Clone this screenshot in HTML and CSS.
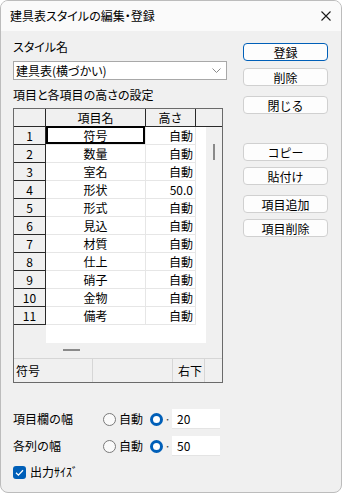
FILE: index.html
```html
<!DOCTYPE html>
<html lang="ja">

<head>
    <meta charset="UTF-8">
    <meta name="viewport" content="width=device-width, initial-scale=1.0">
    <title>建具表スタイルの編集・登録</title>
    <link rel="stylesheet" href="styles.css">
</head>

<body>
    <div class="window">
        <div class="titlebar">
            <span class="title">建具表スタイルの編集・登録</span>
            <svg class="close" width="10" height="10" viewBox="0 0 10 10">
                <path d="M0.5 0.5 L9.5 9.5 M9.5 0.5 L0.5 9.5" stroke="#1a1a1a" stroke-width="1.1" fill="none"/>
            </svg>
        </div>
        <div class="content">
            <div class="main">
                <div class="label first">スタイル名</div>
                <div class="select">
                    <span>建具表(横づかい)</span>
                    <svg width="9" height="5" viewBox="0 0 9 5">
                        <path d="M0.5 0.5 L4.5 4.5 L8.5 0.5" stroke="#8a8a8a" stroke-width="1" fill="none"/>
                    </svg>
                </div>
                <div class="label second">項目と各項目の高さの設定</div>

                <div class="grid">
                    <div class="grid-head">
                        <div class="hnum"></div>
                        <div class="hname">項目名</div>
                        <div class="hht">高さ</div>
                        <div class="hrest"></div>
                    </div>
                    <div class="grid-body">
                        <div class="rows">
                            <div class="row"><div class="num">1</div><div class="name sel">符号</div><div class="ht">自動</div></div>
                            <div class="row"><div class="num">2</div><div class="name">数量</div><div class="ht">自動</div></div>
                            <div class="row"><div class="num">3</div><div class="name">室名</div><div class="ht">自動</div></div>
                            <div class="row"><div class="num">4</div><div class="name">形状</div><div class="ht">50.0</div></div>
                            <div class="row"><div class="num">5</div><div class="name">形式</div><div class="ht">自動</div></div>
                            <div class="row"><div class="num">6</div><div class="name">見込</div><div class="ht">自動</div></div>
                            <div class="row"><div class="num">7</div><div class="name">材質</div><div class="ht">自動</div></div>
                            <div class="row"><div class="num">8</div><div class="name">仕上</div><div class="ht">自動</div></div>
                            <div class="row"><div class="num">9</div><div class="name">硝子</div><div class="ht">自動</div></div>
                            <div class="row"><div class="num">10</div><div class="name">金物</div><div class="ht">自動</div></div>
                            <div class="row"><div class="num">11</div><div class="name">備考</div><div class="ht">自動</div></div>
                            <div class="row filler"><div class="num"></div></div>
                        </div>
                        <div class="vscroll"><div class="vthumb"></div></div>
                    </div>
                    <div class="hscroll"><div class="hthumb"></div></div>
                    <div class="status">
                        <div class="st st1">符号</div>
                        <div class="st st2"></div>
                        <div class="st st3">右下</div>
                        <div class="st st4"></div>
                    </div>
                </div>

                <div class="opt-row">
                    <span class="opt-label">項目欄の幅</span>
                    <span class="radio"></span>
                    <span class="opt-text">自動</span>
                    <span class="radio on"></span>
                    <span class="dot">·</span>
                    <span class="num-input">20</span>
                </div>
                <div class="opt-row">
                    <span class="opt-label">各列の幅</span>
                    <span class="radio"></span>
                    <span class="opt-text">自動</span>
                    <span class="radio on"></span>
                    <span class="dot">·</span>
                    <span class="num-input">50</span>
                </div>
                <div class="check-row">
                    <span class="checkbox">
                        <svg width="13" height="13" viewBox="0 0 13 13">
                            <path d="M3 6.8 L5.4 9.1 L10 4.3" stroke="#fff" stroke-width="1.3" fill="none"/>
                        </svg>
                    </span>
                    <span>出力ｻｲｽﾞ</span>
                </div>
            </div>

            <div class="side">
                <button class="btn default b1">登録</button>
                <button class="btn b2">削除</button>
                <button class="btn b3">閉じる</button>
                <button class="btn b4">コピー</button>
                <button class="btn b5">貼付け</button>
                <button class="btn b6">項目追加</button>
                <button class="btn b7">項目削除</button>
            </div>
        </div>
    </div>
</body>

</html>
```

FILE: styles.css
```css
body {
    margin: 0;
    padding: 0;
    background: #ffffff;
    font-family: "Noto Sans CJK JP", sans-serif;
    font-size: 12px;
    line-height: 16px;
    color: #000;
}
.window {
    width: 342px;
    height: 493px;
    box-sizing: border-box;
    border: 1px solid #bcbcbc;
    border-radius: 8px;
    background: #f0f0f0;
    overflow: hidden;
}
.titlebar {
    height: 30px;
    background: #fafafa;
    display: flex;
    align-items: center;
    justify-content: space-between;
    padding: 0 10px 0 9px;
}
.title {
    font-feature-settings: "palt";
    font-size: 12px;
}
.close {
    display: block;
    margin-right: 0;
}
.content {
    display: flex;
    padding-left: 12px;
    gap: 16px;
}
.main {
    width: 214px;
}
.label {
    font-feature-settings: "palt";
    height: 16px;
}
.label.first {
    margin-top: 8px;
}
.label.second {
    margin-top: 7px;
}
.select {
    margin-top: 6px;
    height: 19px;
    box-sizing: border-box;
    border: 1px solid #a8a8a8;
    background: #fff;
    display: flex;
    align-items: center;
    justify-content: space-between;
    padding: 0 5px 0 2px;
}
.select span {
    font-feature-settings: "palt";
}

/* グリッド */
.grid {
    margin-top: 5px;
    width: 210px;
    box-sizing: border-box;
    border: 1px solid #6a6a6a;
    background: #f0f0f0;
}
.grid-head {
    display: flex;
    height: 18px;
    box-sizing: border-box;
    border-bottom: 1px solid #2a2a2a;
}
.grid-head div {
    box-sizing: border-box;
    text-align: center;
    line-height: 17px;
}
.hnum {
    width: 32px;
    border-right: 1px solid #2a2a2a;
}
.hname {
    width: 100px;
    border-right: 1px solid #2a2a2a;
}
.hht {
    width: 50px;
    border-right: 1px solid #2a2a2a;
}
.hrest {
    flex: 1;
}
.grid-body {
    display: flex;
}
.rows {
    width: 192px;
    background: #fff;
}
.row {
    display: flex;
    height: 18px;
}
.row div {
    box-sizing: border-box;
    line-height: 17px;
    height: 18px;
}
.num {
    width: 32px;
    background: #f0f0f0;
    border-right: 1px solid #2a2a2a;
    border-bottom: 1px solid #2a2a2a;
    text-align: center;
}
.name {
    width: 100px;
    border-right: 1px solid #e6e6e6;
    border-bottom: 1px solid #e6e6e6;
    text-align: center;
    position: relative;
}
.name.sel::after {
    content: "";
    position: absolute;
    left: 0;
    right: 0;
    top: -1px;
    bottom: 0;
    border: 2px solid #000;
}
.ht {
    width: 50px;
    border-right: 1px solid #e6e6e6;
    border-bottom: 1px solid #e6e6e6;
    text-align: right;
    padding-right: 2px;
}
.row.filler .num {
    border-bottom: none;
    border-right: none;
}
.vscroll {
    flex: 1;
    background: #f0f0f0;
    position: relative;
}
.vthumb {
    position: absolute;
    left: 7px;
    top: 17px;
    width: 2px;
    height: 16px;
    background: #8a8a8a;
}
.hscroll {
    height: 15px;
    position: relative;
}
.hthumb {
    position: absolute;
    left: 49px;
    top: 6px;
    width: 17px;
    height: 2px;
    background: #8a8a8a;
}
.status {
    display: flex;
    height: 24px;
    box-sizing: border-box;
    border-top: 1px solid #d6d6d6;
}
.st {
    box-sizing: border-box;
    line-height: 23px;
    border-right: 1px solid #d6d6d6;
}
.st1 {
    width: 79px;
    padding-left: 2px;
}
.st2 {
    width: 80px;
}
.st3 {
    width: 32px;
    padding-left: 5px;
}
.st4 {
    flex: 1;
    border-right: none;
}

/* 幅の設定 */
.opt-row {
    display: flex;
    align-items: center;
    height: 20px;
    margin-top: 26px;
}
.opt-row + .opt-row {
    margin-top: 7px;
}
.opt-label {
    width: 90px;
}
.radio {
    width: 13px;
    height: 13px;
    box-sizing: border-box;
    border: 1px solid #7a7a7a;
    border-radius: 50%;
    background: #fafafa;
}
.radio.on {
    border: 3.5px solid #005fb8;
    background: #fff;
    margin-left: 7px;
}
.opt-text {
    margin-left: 3px;
}
.dot {
    width: 9px;
    text-align: center;
    color: #444;
}
.num-input {
    width: 48px;
    height: 20px;
    box-sizing: border-box;
    background: #fff;
    border-bottom: 1px solid #e4e4e4;
    padding-left: 5px;
    line-height: 19px;
}
.check-row {
    display: flex;
    align-items: center;
    margin-top: 9px;
    height: 14px;
}
.checkbox {
    width: 13px;
    height: 13px;
    border-radius: 3px;
    background: #005fb8;
    margin-right: 4px;
}
.checkbox svg {
    display: block;
}

/* ボタン */
.side {
    width: 85px;
    display: flex;
    flex-direction: column;
}
.btn {
    height: 18px;
    box-sizing: border-box;
    border: 1px solid #d0d0d0;
    border-radius: 4px;
    background: #fdfdfd;
    font-family: "Noto Sans CJK JP", sans-serif;
    font-size: 12px;
    line-height: 15px;
    padding: 0;
    color: #000;
}
.btn.default {
    border-color: #005fb8;
}
.b1 { margin-top: 12px; }
.b2 { margin-top: 7px; }
.b3 { margin-top: 10px; }
.b4 { margin-top: 29px; }
.b5 { margin-top: 6px; }
.b6 { margin-top: 10px; }
.b7 { margin-top: 6px; }
```
